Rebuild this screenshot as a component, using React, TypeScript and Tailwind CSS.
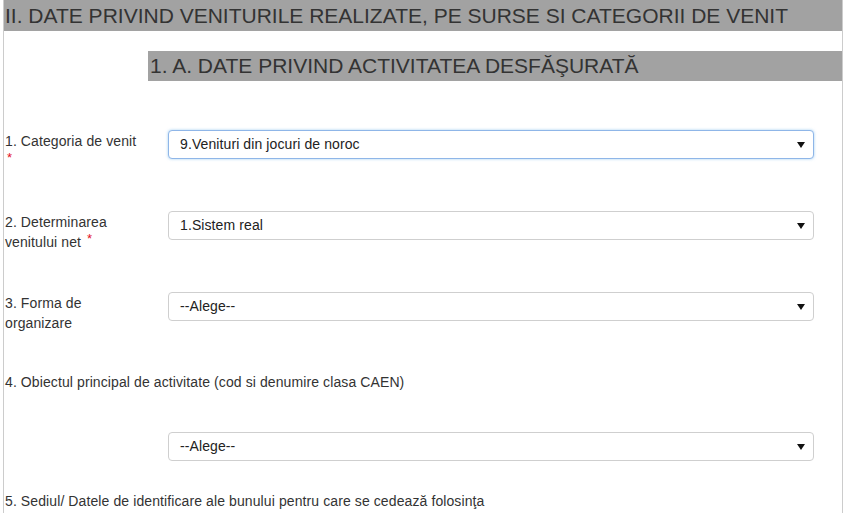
import React from "react"

type Row = {
    label: React.ReactNode
    value: string
    focused?: boolean
}

function FakeSelect({value, focused}: {value: string; focused?: boolean}) {
    return (
        <div
            className={
                "flex h-[29px] w-[646px] items-center justify-between rounded-[4px] border bg-white pl-[11px] pr-[7px] text-[14px] tracking-[0.1px] text-[#222] " +
                (focused
                    ? "border-[#8fb6e8] shadow-[0_0_3px_rgba(102,175,233,0.6)]"
                    : "border-[#cfcfcf]")
            }
        >
            <span>{value}</span>
            <svg width="8" height="6" viewBox="0 0 8 6" className="mr-[1px]">
                <path d="M0 0 L8 0 L4 6 Z" fill="#111" />
            </svg>
        </div>
    )
}

const Star = () => <span className="relative -top-[4px] ml-[2px] text-[13px] text-[#e3101e]">*</span>

export default function App() {
    const rows: Row[] = [
        {
            label: (
                <>
                    1. Categoria de venit <Star />
                </>
            ),
            value: "9.Venituri din jocuri de noroc",
            focused: true,
        },
        {
            label: (
                <>
                    2. Determinarea venitului net <Star />
                </>
            ),
            value: "1.Sistem real",
        },
        {
            label: <>3. Forma de organizare</>,
            value: "--Alege--",
        },
    ]

    return (
        <div className="min-h-[513px] bg-white font-['Liberation_Sans',Arial,sans-serif] text-[#333]">
            <div className="ml-[3px] w-[840px] min-h-[513px] border-x border-[#cccccc]">
                <h2 className="h-[31px] bg-[#a2a2a2] pl-[1px] text-[21px] leading-[31px] text-[#333]">
                    II. DATE PRIVIND VENITURILE REALIZATE, PE SURSE SI CATEGORII DE VENIT
                </h2>

                <h3 className="mt-[20px] ml-[144px] h-[30px] bg-[#a2a2a2] pl-[2px] text-[21px] leading-[30px] text-[#333]">
                    1. A. DATE PRIVIND ACTIVITATEA DESFĂŞURATĂ
                </h3>

                <form className="mt-[49px]">
                    {rows.map((row, i) => (
                        <div key={i} className="mb-[40px] flex items-start">
                            <label className="h-[41px] w-[164px] pt-[1px] pl-[1px] pr-[26px] text-[14px] leading-[20px] tracking-[0.1px]">
                                {row.label}
                            </label>
                            <FakeSelect value={row.value} focused={row.focused} />
                        </div>
                    ))}

                    <div className="-mt-[1px] pl-[1px] text-[14px] leading-[20px] tracking-[0.1px]">
                        4. Obiectul principal de activitate (cod si denumire clasa CAEN)
                    </div>
                    <div className="mt-[40px] flex">
                        <div className="w-[164px]" />
                        <FakeSelect value="--Alege--" />
                    </div>

                    <div className="mt-[30px] pl-[1px] text-[14px] leading-[20px] tracking-[0.1px]">
                        5. Sediul/ Datele de identificare ale bunului pentru care se cedează folosinţa
                    </div>
                </form>
            </div>
        </div>
    )
}
